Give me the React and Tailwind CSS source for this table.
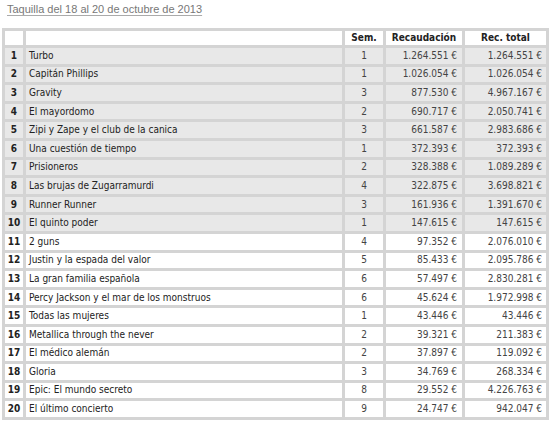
const rows = [
  ["Turbo", 1, "1.264.551 €", "1.264.551 €"],
  ["Capitán Phillips", 1, "1.026.054 €", "1.026.054 €"],
  ["Gravity", 3, "877.530 €", "4.967.167 €"],
  ["El mayordomo", 2, "690.717 €", "2.050.741 €"],
  ["Zipi y Zape y el club de la canica", 3, "661.587 €", "2.983.686 €"],
  ["Una cuestión de tiempo", 1, "372.393 €", "372.393 €"],
  ["Prisioneros", 2, "328.388 €", "1.089.289 €"],
  ["Las brujas de Zugarramurdi", 4, "322.875 €", "3.698.821 €"],
  ["Runner Runner", 3, "161.936 €", "1.391.670 €"],
  ["El quinto poder", 1, "147.615 €", "147.615 €"],
  ["2 guns", 4, "97.352 €", "2.076.010 €"],
  ["Justin y la espada del valor", 5, "85.433 €", "2.095.786 €"],
  ["La gran familia española", 6, "57.497 €", "2.830.281 €"],
  ["Percy Jackson y el mar de los monstruos", 6, "45.624 €", "1.972.998 €"],
  ["Todas las mujeres", 1, "43.446 €", "43.446 €"],
  ["Metallica through the never", 2, "39.321 €", "211.383 €"],
  ["El médico alemán", 2, "37.897 €", "119.092 €"],
  ["Gloria", 3, "34.769 €", "268.334 €"],
  ["Epic: El mundo secreto", 8, "29.552 €", "4.226.763 €"],
  ["El último concierto", 9, "24.747 €", "942.047 €"],
];

export default function App() {
  return (
    <div className="w-[550px] h-[430px] bg-white font-['DejaVu_Sans_Condensed','DejaVu_Sans',sans-serif] text-[#222]">
      <div className="pl-[7px] pt-[1px] h-[28px] leading-[14px]">
        <span className="text-[11px] text-[#777] underline underline-offset-2 decoration-[#aaa] font-['Liberation_Sans',sans-serif]">
          Taquilla del 18 al 20 de octubre de 2013
        </span>
      </div>
      <table className="ml-[2px] w-[547px] border-separate border-spacing-[3px] bg-[#d4d4d4] text-[10px] leading-none">
        <thead>
          <tr className="h-[14px] bg-white font-bold text-[10px]">
            <th className="w-[18px]"></th>
            <th></th>
            <th className="w-[38px] text-center">Sem.</th>
            <th className="w-[76px] text-center">Recaudación</th>
            <th className="w-[81px] text-center">Rec. total</th>
          </tr>
        </thead>
        <tbody>
          {rows.map(([title, sem, rec, total], i) => (
            <tr
              key={i}
              className={`h-[15.6px] ${i < 10 ? "bg-[#e8e8e8]" : "bg-white"}`}
            >
              <td className="text-center font-bold">{i + 1}</td>
              <td className="pl-[3px]">{title}</td>
              <td className="text-center text-[#444]">{sem}</td>
              <td className="text-right pr-[5px] text-[#444]">{rec}</td>
              <td className="text-right pr-[4px] text-[#444]">{total}</td>
            </tr>
          ))}
        </tbody>
      </table>
    </div>
  );
}
